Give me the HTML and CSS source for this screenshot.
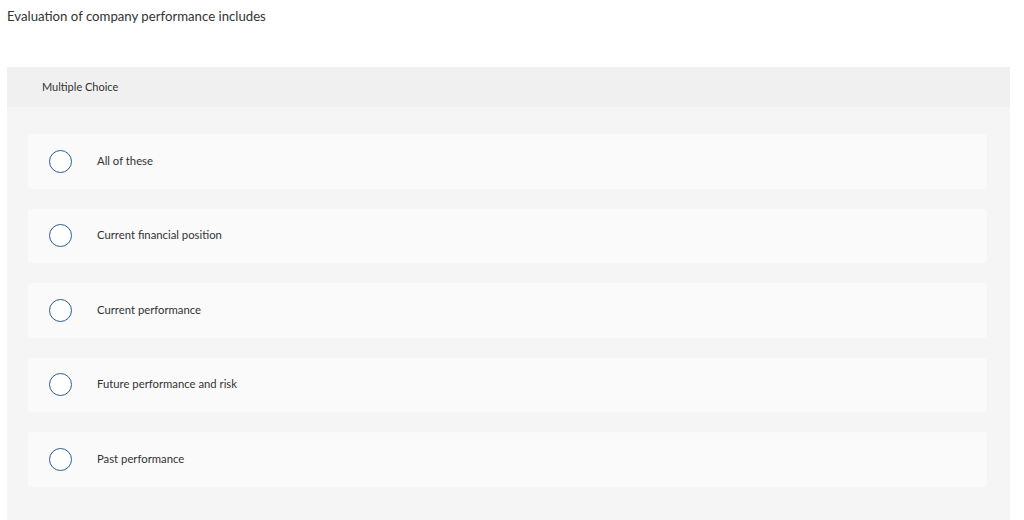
FILE: index.html
```html
<!DOCTYPE html>
<html lang="en">
<head>
    <meta charset="UTF-8">
    <title>Multiple Choice</title>
    <link rel="stylesheet" href="styles.css">
</head>
<body>
    <p class="question">Evaluation of company performance includes</p>

    <div class="panel">
        <div class="panel-header">Multiple Choice</div>
        <div class="options">
            <label class="option"><span class="radio"></span><span class="option-text">All of these</span></label>
            <label class="option"><span class="radio"></span><span class="option-text">Current financial position</span></label>
            <label class="option"><span class="radio"></span><span class="option-text">Current performance</span></label>
            <label class="option"><span class="radio"></span><span class="option-text">Future performance and risk</span></label>
            <label class="option"><span class="radio"></span><span class="option-text">Past performance</span></label>
        </div>
    </div>
</body>
</html>
```

FILE: styles.css
```css
* {
    margin: 0;
    padding: 0;
    box-sizing: border-box;
}

body {
    font-family: Lato, "Open Sans", sans-serif;
    color: #333;
    background: #fff;
}

.question {
    font-size: 13.2px;
    line-height: 16px;
    padding: 8px 7px 0;
    height: 67px;
}

.panel {
    width: 1003px;
    margin-left: 7px;
    background: #f5f5f5;
    min-height: 453px;
}

.panel-header {
    height: 40px;
    background: #f0f0f0;
    padding: 0 0 2px 35px;
    display: flex;
    align-items: center;
    font-size: 11px;
}

.options {
    padding: 27px 23px 20px 21px;
    display: flex;
    flex-direction: column;
    gap: 20px;
}

.option {
    height: 54.5px;
    background: #fafafa;
    border-radius: 3px;
    display: flex;
    align-items: center;
    padding-left: 21px;
    cursor: pointer;
}

.radio {
    width: 23px;
    height: 23px;
    border: 1.5px solid #2a5d94;
    border-radius: 50%;
    background: #fff;
    flex-shrink: 0;
}

.option-text {
    margin-left: 25px;
    margin-bottom: 2px;
    font-size: 11.3px;
    color: #333;
}
```
